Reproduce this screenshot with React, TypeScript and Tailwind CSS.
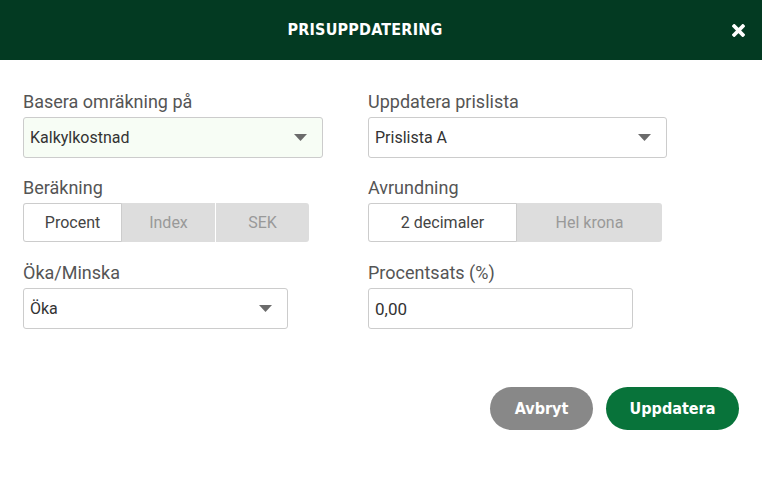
const Caret = () => (
  <svg width="13" height="7" viewBox="0 0 13 7" className="shrink-0">
    <path d="M0 0 H13 L6.5 7 Z" fill="#6b6b6b" />
  </svg>
);

const Select = ({ value, width, tint }: { value: string; width: string; tint?: boolean }) => (
  <div
    className={`${width} h-[41px] flex items-center justify-between pl-[6px] pr-[15px] border border-[#cccccc] rounded-[3px] ${
      tint ? "bg-[#f7fdf5]" : "bg-white"
    }`}
  >
    <span className="text-[16px] text-[#333]">{value}</span>
    <Caret />
  </div>
);

const Label = ({ children }: { children: React.ReactNode }) => (
  <div className="text-[18px] leading-[22px] text-[#555] mb-[4px]">{children}</div>
);

const Segments = ({ items, widths, width }: { items: string[]; widths: string[]; width: string }) => (
  <div className={`${width} h-[39px] flex rounded-[3px] bg-[#dddddd] overflow-hidden`}>
    {items.map((item, i) => (
      <div
        key={item}
        className={`${widths[i]} flex items-center justify-center text-[16px] ${
          i === 0
            ? "bg-white border border-[#cccccc] rounded-l-[3px] text-[#444]"
            : "text-[#999]" + (i > 1 ? " border-l border-white" : "")
        }`}
      >
        {item}
      </div>
    ))}
  </div>
);

export default function App() {
  return (
    <div className="w-[762px] h-[499px] bg-white font-['Roboto',sans-serif]">
      <header className="h-[60px] bg-[#033a22] flex items-center relative">
        <h1 className="flex-1 text-center pr-[32px] text-white text-[16px] font-bold tracking-[0.2px] font-['DejaVu_Sans_Condensed','DejaVu_Sans',sans-serif]">
          PRISUPPDATERING
        </h1>
        <button className="absolute right-[17px] top-[24px] w-[13px] h-[13px]">
          <svg viewBox="0 0 12 12" width="13" height="13">
            <path d="M2 2 L10 10 M10 2 L2 10" stroke="white" strokeWidth="3.4" strokeLinecap="square" />
          </svg>
        </button>
      </header>

      <div className="pt-[31px] pl-[23px] grid grid-cols-[345px_1fr] gap-y-[19px]">
        <div>
          <Label>Basera omräkning på</Label>
          <Select value="Kalkylkostnad" width="w-[300px]" tint />
        </div>
        <div>
          <Label>Uppdatera prislista</Label>
          <Select value="Prislista A" width="w-[299px]" />
        </div>
        <div>
          <Label>Beräkning</Label>
          <Segments items={["Procent", "Index", "SEK"]} widths={["w-[99px]", "w-[93px]", "w-[94px]"]} width="w-[286px]" />
        </div>
        <div>
          <Label>Avrundning</Label>
          <Segments items={["2 decimaler", "Hel krona"]} widths={["w-[149px]", "w-[145px]"]} width="w-[294px]" />
        </div>
        <div className="pt-[1px]">
          <Label>Öka/Minska</Label>
          <Select value="Öka" width="w-[265px]" />
        </div>
        <div className="pt-[1px]">
          <Label>Procentsats (%)</Label>
          <div className="w-[265px] h-[41px] flex items-center px-[6px] pt-[2px] border border-[#cccccc] rounded-[3px] text-[17px] text-[#333]">
            0,00
          </div>
        </div>
      </div>

      <div className="flex justify-end gap-[13px] pr-[23px] mt-[58px]">
        <button className="w-[103px] h-[43px] rounded-full bg-[#888888] text-white text-[16px] font-bold font-['DejaVu_Sans_Condensed','DejaVu_Sans',sans-serif]">
          Avbryt
        </button>
        <button className="w-[133px] h-[43px] rounded-full bg-[#08733a] text-white text-[16px] font-bold font-['DejaVu_Sans_Condensed','DejaVu_Sans',sans-serif]">
          Uppdatera
        </button>
      </div>
    </div>
  );
}
